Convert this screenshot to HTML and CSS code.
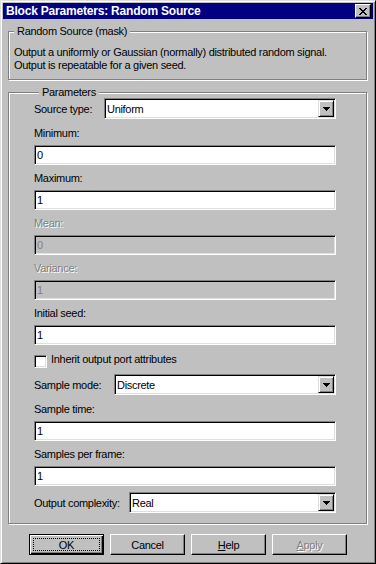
FILE: index.html
```html
<!DOCTYPE html>
<html lang="en">
<head>
    <meta charset="UTF-8">
    <title>Block Parameters: Random Source</title>
    <link rel="stylesheet" href="styles.css">
</head>
<body>
    <div class="window">
        <div class="titlebar">
            <span class="title">Block Parameters: Random Source</span>
            <button class="close-btn" aria-label="Close">
                <svg width="8" height="7" viewBox="0 0 8 7" shape-rendering="crispEdges"><path d="M0 0h2v1h-2zM6 0h2v1h-2zM1 1h2v1h-2zM5 1h2v1h-2zM2 2h4v1h-4zM3 3h2v1h-2zM2 4h4v1h-4zM1 5h2v1h-2zM5 5h2v1h-2zM0 6h2v1h-2zM6 6h2v1h-2z" fill="#000"/></svg>
            </button>
        </div>

        <div class="client">
            <!-- Mask description -->
            <div class="group">
                <div class="group-title">Random Source (mask)</div>
                <p class="desc">Output a uniformly or Gaussian (normally) distributed random signal.<br>Output is repeatable for a given seed.</p>
            </div>

            <!-- Parameters -->
            <div class="group group-params">
                <div class="group-title">Parameters</div>

                <div class="combo-row">
                    <label class="combo-label label-source">Source type:</label>
                    <div class="combo">
                        <span class="combo-value">Uniform</span>
                        <span class="combo-arrow"><svg width="7" height="4" viewBox="0 0 7 4" shape-rendering="crispEdges"><path d="M0 0h7v1h-7zM1 1h5v1h-5zM2 2h3v1h-3zM3 3h1v1h-1z" fill="#000"/></svg></span>
                    </div>
                </div>

                <label class="field-label">Minimum:</label>
                <input class="field" type="text" value="0">

                <label class="field-label">Maximum:</label>
                <input class="field" type="text" value="1">

                <label class="field-label disabled">Mean:</label>
                <input class="field" type="text" value="0" disabled>

                <label class="field-label disabled">Variance:</label>
                <input class="field" type="text" value="1" disabled>

                <label class="field-label">Initial seed:</label>
                <input class="field" type="text" value="1">

                <div class="check-row">
                    <input class="check" type="checkbox">
                    <label class="check-label">Inherit output port attributes</label>
                </div>

                <div class="combo-row">
                    <label class="combo-label label-mode">Sample mode:</label>
                    <div class="combo">
                        <span class="combo-value">Discrete</span>
                        <span class="combo-arrow"><svg width="7" height="4" viewBox="0 0 7 4" shape-rendering="crispEdges"><path d="M0 0h7v1h-7zM1 1h5v1h-5zM2 2h3v1h-3zM3 3h1v1h-1z" fill="#000"/></svg></span>
                    </div>
                </div>

                <label class="field-label">Sample time:</label>
                <input class="field" type="text" value="1">

                <label class="field-label">Samples per frame:</label>
                <input class="field" type="text" value="1">

                <div class="combo-row">
                    <label class="combo-label label-complexity">Output complexity:</label>
                    <div class="combo">
                        <span class="combo-value">Real</span>
                        <span class="combo-arrow"><svg width="7" height="4" viewBox="0 0 7 4" shape-rendering="crispEdges"><path d="M0 0h7v1h-7zM1 1h5v1h-5zM2 2h3v1h-3zM3 3h1v1h-1z" fill="#000"/></svg></span>
                    </div>
                </div>
            </div>

            <!-- Dialog buttons -->
            <div class="buttons">
                <button class="btn btn-default"><span class="focus">OK</span></button>
                <button class="btn">Cancel</button>
                <button class="btn"><u>H</u>elp</button>
                <button class="btn" disabled><u>A</u>pply</button>
            </div>
        </div>
    </div>
</body>
</html>
```

FILE: styles.css
```css
* { box-sizing: border-box; }
body { margin: 0; background: #c0c0c0; font-family: "Liberation Sans", Arial, sans-serif; font-size: 11px; letter-spacing: -0.3px; color: #000; }

.window { width: 376px; height: 564px; background: #c0c0c0; border: 1px solid; border-color: #dfdfdf #000 #000 #dfdfdf; box-shadow: inset 1px 1px #fff, inset -1px -1px #808080; padding: 2px; }
.titlebar { display: flex; align-items: center; height: 16px; background: #000080; padding: 0 2px 0 3px; }
.title { flex: 1; color: #fff; font-weight: bold; font-size: 12px; letter-spacing: -0.2px; line-height: 16px; white-space: nowrap; }
.close-btn { display: flex; align-items: center; justify-content: center; width: 16px; height: 14px; padding: 0; background: #c0c0c0; border: 1px solid; border-color: #fff #000 #000 #fff; box-shadow: inset -1px -1px #808080; }

.client { padding: 12px 6px 0 5px; }

/* etched group box */
.group { border: 1px solid #808080; box-shadow: inset 1px 1px #fff, 1px 1px #fff; }
.group-title { width: fit-content; margin: -7px 0 -1px 5px; padding: 0 3px; background: #c0c0c0; line-height: 13px; white-space: nowrap; }
.desc { margin: 9px 0 0; padding: 0 5px 7px; line-height: 13px; }
.group-params { margin-top: 12px; padding: 0 30px 10px 25px; }

/* combo boxes */
.combo-row { display: flex; align-items: baseline; }
.check-row + .combo-row, .field + .combo-row { margin-top: 6px; }
.combo-label { flex: none; line-height: 13px; }
.label-source { width: 70px; }
.label-mode { width: 80px; }
.label-complexity { width: 95px; }
.combo { flex: 1; display: flex; height: 21px; padding: 1px; background: #fff; border: 1px solid; border-color: #808080 #fff #fff #808080; box-shadow: inset 1px 1px #000, inset -1px -1px #dfdfdf; }
.combo-value { flex: 1; padding: 2px 0 0 1px; line-height: 15px; }
.combo-arrow { display: flex; align-items: center; justify-content: center; width: 16px; height: 17px; background: #c0c0c0; border: 1px solid; border-color: #dfdfdf #000 #000 #dfdfdf; box-shadow: inset 1px 1px #fff, inset -1px -1px #808080; }

/* edit fields */
.field-label { display: block; margin-top: 7px; line-height: 13px; }
.combo-row + .field-label { margin-top: 8px; }
.field-label.disabled { color: #808080; text-shadow: 1px 1px #fff; }
.field { display: block; width: 100%; height: 20px; margin: 5px 0 0; padding: 1px 2px; font: inherit; letter-spacing: inherit; color: #000; background: #fff; border: 1px solid; border-color: #808080 #fff #fff #808080; box-shadow: inset 1px 1px #000, inset -1px -1px #dfdfdf; outline: none; }
.field:disabled { background: #c0c0c0; color: #808080; }

/* checkbox */
.check-row { display: flex; align-items: flex-start; margin-top: 8px; }
.check { appearance: none; flex: none; width: 13px; height: 13px; margin: 2px 4px 0 0; background: #fff; border: 1px solid; border-color: #808080 #fff #fff #808080; box-shadow: inset 1px 1px #000, inset -1px -1px #dfdfdf; }
.check-label { line-height: 13px; }

/* buttons */
.buttons { display: flex; justify-content: center; gap: 6px; margin-top: 10px; padding-left: 1px; }
.btn { width: 75px; height: 21px; padding: 0; font: inherit; letter-spacing: inherit; color: #000; background: #c0c0c0; border: 1px solid; border-color: #fff #000 #000 #fff; box-shadow: inset -1px -1px #808080; }
.btn u { text-decoration: underline; text-underline-offset: 1px; }
.btn:disabled { color: #808080; text-shadow: 1px 1px #fff; }
.btn-default { padding: 3px; border-color: #000; box-shadow: inset 1px 1px #fff, inset -1px -1px #000, inset -2px -2px #808080; }
.focus { display: flex; align-items: center; justify-content: center; height: 100%; border: 1px dotted #000; }
```
